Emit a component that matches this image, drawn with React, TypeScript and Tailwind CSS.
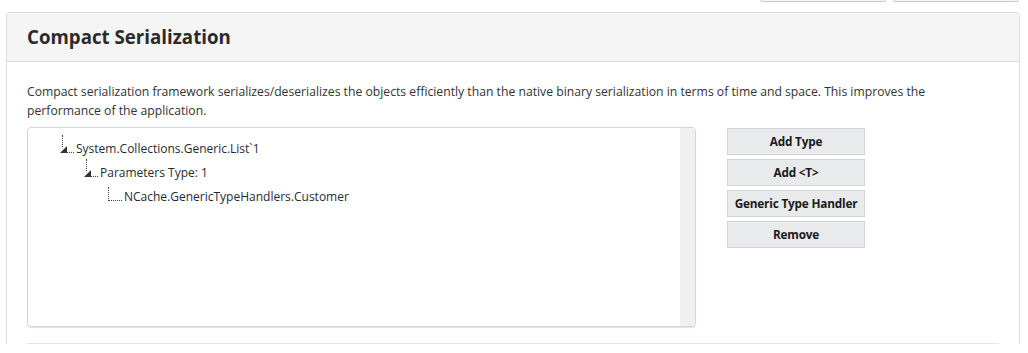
import React from "react"

type Node = {
	label: string,
	level: number,
	expanded?: boolean,
}

const nodes: Node[] = [
	{ label: "System.Collections.Generic.List`1", level: 0, expanded: true },
	{ label: "Parameters Type: 1", level: 1, expanded: true },
	{ label: "NCache.GenericTypeHandlers.Customer", level: 2 },
]

const buttons = ["Add Type", "Add <T>", "Generic Type Handler", "Remove"]

function TreeRow({ node }: { node: Node }) {
	return (
		<div className="relative flex h-[24px] items-center" style={{ paddingLeft: 32 + node.level * 24 }}>
			{node.expanded ? (
				<div className="relative mr-[2px] flex h-[24px] w-[14px] items-center">
					<div className="absolute left-[2px] top-[-2px] h-[12px] border-l border-dotted border-[#444]"></div>
					<svg width="7" height="7" viewBox="0 0 7 7" className="absolute left-0 top-[9px]">
						<polygon points="7,0 7,7 0,7" fill="#333" />
					</svg>
					<div className="absolute left-[7px] top-[15px] w-[7px] border-t border-dotted border-[#444]"></div>
				</div>
			) : (
				<div className="relative mr-[2px] flex h-[24px] w-[14px] items-center">
					<div className="absolute left-0 top-[2px] h-[14px] border-l border-dotted border-[#444]"></div>
					<div className="absolute left-0 top-[15px] w-[14px] border-t border-dotted border-[#444]"></div>
				</div>
			)}
			<span className="whitespace-nowrap text-[12px] text-[#1f2a36]">{node.label}</span>
		</div>
	)
}

function App() {
	return (
		<div className="relative h-[353px] w-[1028px] overflow-hidden bg-white font-['Open_Sans',sans-serif] text-[#333]">
			<div className="flex h-[2px] justify-end gap-[7px] pr-[9px]">
				<div className="h-[2px] w-[126px] rounded-b-[3px] border-b border-x border-[#c8cdd2] bg-[#f4f4f4]"></div>
				<div className="h-[2px] w-[126px] rounded-b-[3px] border-b border-x border-[#c8cdd2] bg-[#f4f4f4]"></div>
			</div>

			<div className="ml-[6px] mr-[8px] mt-[10px] rounded-t-[4px] border border-b-0 border-[#dddddd]">
				<div className="flex h-[49px] items-center border-b border-[#dddddd] bg-[#f5f5f5] px-[20px]">
					<h2 className="text-[18.7px] font-bold text-[#2b2b2b]">Compact Serialization</h2>
				</div>

				<div className="px-[20px] pt-[20px]">
					<p className="text-[12.2px] leading-[19px] text-[#333]">
						Compact serialization framework serializes/deserializes the objects efficiently than the native binary serialization in terms of time and space. This improves the performance of the application.
					</p>

					<div className="mt-[7px] flex items-start gap-[31px]">
						<div className="flex h-[200px] w-[669px] overflow-hidden rounded-[4px] border border-[#d6d6d6] shadow-[0_1px_1px_rgba(0,0,0,0.12)]">
							<div className="flex-1 pt-[9px]">
								{nodes.map((node, i) => (
									<TreeRow key={i} node={node} />
								))}
							</div>
							<div className="w-[15px] bg-[#f0f0f0]"></div>
						</div>

						<div className="flex w-[138px] flex-col gap-[4px] pt-[1px]">
							{buttons.map((b) => (
								<button
									key={b}
									className="h-[27px] w-full border border-[#d3d6d9] bg-[#e8eaec] pt-[1px] text-[11.8px] font-bold tracking-[-0.2px] text-[#1a1a1a]"
								>
									{b}
								</button>
							))}
						</div>
					</div>

					<div className="mt-[16px] h-px bg-[#e5e5e5]"></div>
				</div>
			</div>
		</div>
	)
}

export default App
